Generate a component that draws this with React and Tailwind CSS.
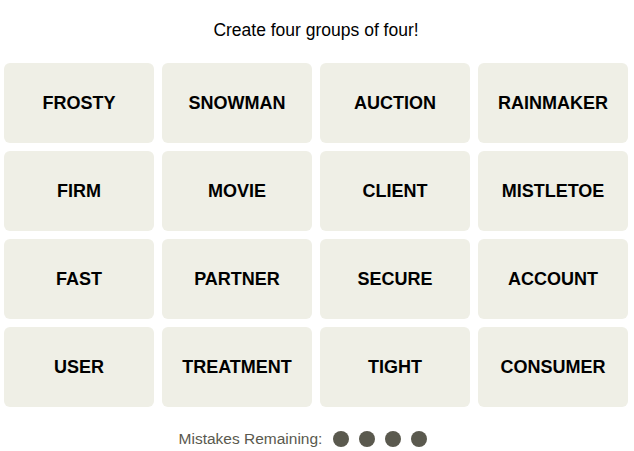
export default function App() {
  const words = [
    'FROSTY', 'SNOWMAN', 'AUCTION', 'RAINMAKER',
    'FIRM', 'MOVIE', 'CLIENT', 'MISTLETOE',
    'FAST', 'PARTNER', 'SECURE', 'ACCOUNT',
    'USER', 'TREATMENT', 'TIGHT', 'CONSUMER',
  ];

  return (
    <div className="w-[634px] h-[451px] bg-white pl-[4px] font-['Liberation_Sans',Arial,sans-serif]">
      <p className="w-[624px] pt-[17px] h-[63px] text-center text-[17.5px] text-black">
        Create four groups of four!
      </p>
      <div className="w-[624px] grid grid-cols-4 gap-[8px]">
        {words.map((w) => (
          <button
            key={w}
            className="h-[80px] rounded-[6px] bg-[#efefe6] flex items-center justify-center text-[18px] font-bold text-black"
          >
            {w}
          </button>
        ))}
      </div>
      <div className="w-[624px] flex items-center justify-center gap-[10px] pt-[20px] pr-[26px]">
        <span className="text-[15.5px] text-[#5a594e] mr-[1px]">Mistakes Remaining:</span>
        {[0, 1, 2, 3].map((i) => (
          <span key={i} className="w-[16px] h-[16px] rounded-full bg-[#5a594e]" />
        ))}
      </div>
    </div>
  );
}
